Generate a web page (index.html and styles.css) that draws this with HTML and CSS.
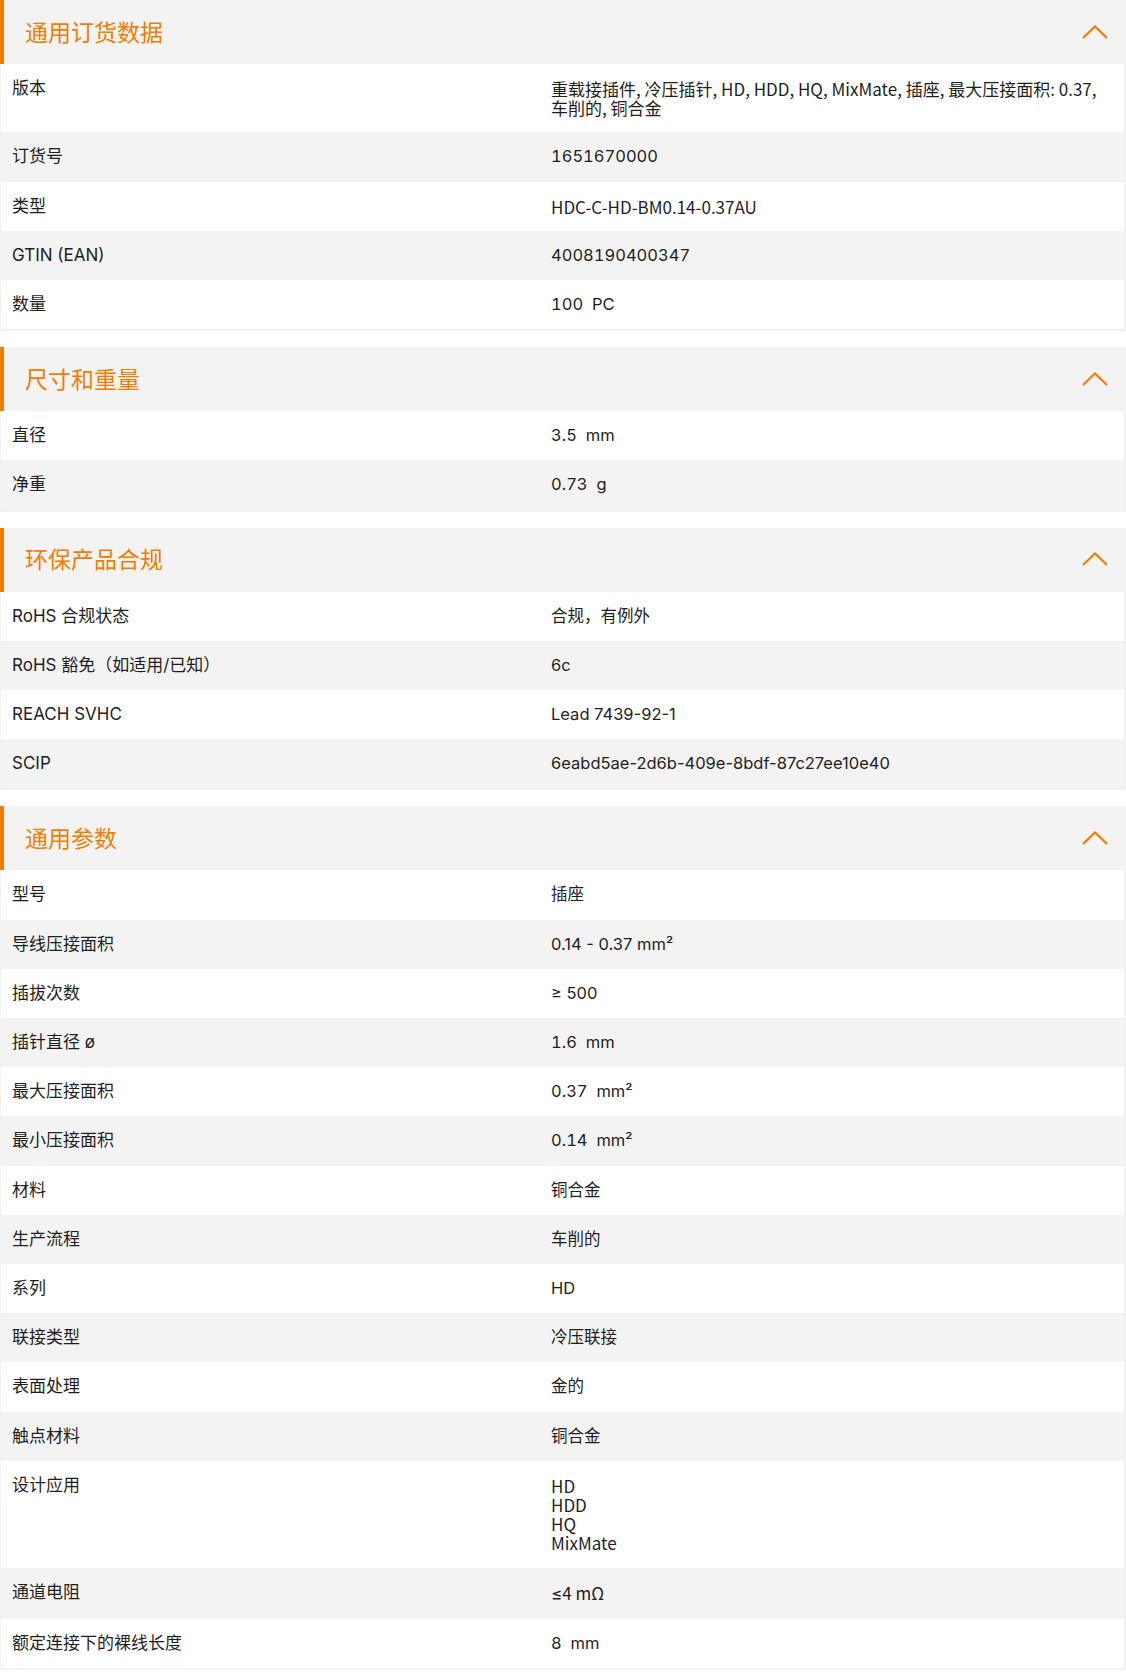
FILE: index.html
```html
<!DOCTYPE html>
<html lang="zh-CN">
<head>
<meta charset="utf-8">
<title>产品数据</title>
<link rel="stylesheet" href="styles.css">
</head>
<body>
<main class="page">

<section class="group">
  <div class="group-head">
    <h2 class="group-title">通用订货数据</h2>
    <svg class="chev" viewBox="0 0 26 14" width="26" height="14"><polyline points="1,13 13,1.5 25,13" fill="none" stroke="#f07d00" stroke-width="2.2"/></svg>
  </div>
  <div class="table">
    <div class="row"><div class="cell label">版本</div><div class="cell value cjk">重载接插件, 冷压插针, HD, HDD, HQ, MixMate, 插座, 最大压接面积: 0.37,<br>车削的, 铜合金</div></div>
    <div class="row"><div class="cell label">订货号</div><div class="cell value num">1651670000</div></div>
    <div class="row"><div class="cell label">类型</div><div class="cell value cjk">HDC-C-HD-BM0.14-0.37AU</div></div>
    <div class="row"><div class="cell label">GTIN (EAN)</div><div class="cell value num">4008190400347</div></div>
    <div class="row"><div class="cell label">数量</div><div class="cell value num">100&nbsp; PC</div></div>
  </div>
</section>

<section class="group">
  <div class="group-head">
    <h2 class="group-title">尺寸和重量</h2>
    <svg class="chev" viewBox="0 0 26 14" width="26" height="14"><polyline points="1,13 13,1.5 25,13" fill="none" stroke="#f07d00" stroke-width="2.2"/></svg>
  </div>
  <div class="table">
    <div class="row"><div class="cell label">直径</div><div class="cell value num">3.5&nbsp; mm</div></div>
    <div class="row"><div class="cell label">净重</div><div class="cell value num">0.73&nbsp; g</div></div>
  </div>
</section>

<section class="group">
  <div class="group-head">
    <h2 class="group-title">环保产品合规</h2>
    <svg class="chev" viewBox="0 0 26 14" width="26" height="14"><polyline points="1,13 13,1.5 25,13" fill="none" stroke="#f07d00" stroke-width="2.2"/></svg>
  </div>
  <div class="table">
    <div class="row"><div class="cell label">RoHS 合规状态</div><div class="cell value">合规，有例外</div></div>
    <div class="row"><div class="cell label">RoHS 豁免（如适用/已知）</div><div class="cell value">6c</div></div>
    <div class="row"><div class="cell label">REACH SVHC</div><div class="cell value">Lead 7439-92-1</div></div>
    <div class="row"><div class="cell label">SCIP</div><div class="cell value">6eabd5ae-2d6b-409e-8bdf-87c27ee10e40</div></div>
  </div>
</section>

<section class="group">
  <div class="group-head">
    <h2 class="group-title">通用参数</h2>
    <svg class="chev" viewBox="0 0 26 14" width="26" height="14"><polyline points="1,13 13,1.5 25,13" fill="none" stroke="#f07d00" stroke-width="2.2"/></svg>
  </div>
  <div class="table">
    <div class="row"><div class="cell label">型号</div><div class="cell value">插座</div></div>
    <div class="row"><div class="cell label">导线压接面积</div><div class="cell value">0.14 - 0.37 mm²</div></div>
    <div class="row"><div class="cell label">插拔次数</div><div class="cell value">≥ 500</div></div>
    <div class="row"><div class="cell label">插针直径 ø</div><div class="cell value num">1.6&nbsp; mm</div></div>
    <div class="row"><div class="cell label">最大压接面积</div><div class="cell value num">0.37&nbsp; mm²</div></div>
    <div class="row"><div class="cell label">最小压接面积</div><div class="cell value num">0.14&nbsp; mm²</div></div>
    <div class="row"><div class="cell label">材料</div><div class="cell value">铜合金</div></div>
    <div class="row"><div class="cell label">生产流程</div><div class="cell value">车削的</div></div>
    <div class="row"><div class="cell label">系列</div><div class="cell value">HD</div></div>
    <div class="row"><div class="cell label">联接类型</div><div class="cell value">冷压联接</div></div>
    <div class="row"><div class="cell label">表面处理</div><div class="cell value">金的</div></div>
    <div class="row"><div class="cell label">触点材料</div><div class="cell value">铜合金</div></div>
    <div class="row"><div class="cell label">设计应用</div><div class="cell value cjk multi">HD<br>HDD<br>HQ<br>MixMate</div></div>
    <div class="row"><div class="cell label">通道电阻</div><div class="cell value cjk"><span class="sym">≤</span>4 mΩ</div></div>
    <div class="row"><div class="cell label">额定连接下的裸线长度</div><div class="cell value num">8&nbsp; mm</div></div>
  </div>
</section>

</main>
</body>
</html>
```

FILE: styles.css
```css
html, body {
  margin: 0;
  padding: 0;
  background: #ffffff;
}

.page {
  width: 1126px;
  font-family: "Inter", "Noto Sans CJK SC", sans-serif;
  font-size: 16.5px;
  color: #1e1e1e;
}

.group {
  margin-bottom: 16px;
}

.group-head {
  height: 64px;
  background: #f3f3f3;
  border-left: 4px solid #f07d00;
  display: flex;
  align-items: center;
  justify-content: space-between;
  padding: 0 18px 3px 21px;
  box-sizing: border-box;
}

.group-title {
  margin: 0;
  font-family: "Noto Sans CJK SC", sans-serif;
  font-weight: 400;
  font-size: 23px;
  color: #f07d00;
  line-height: 30px;
}

.chev {
  display: block;
  margin-top: 2px;
}

.table {
  border-left: 1px solid #f1f1f1;
  border-right: 2px solid #f1f1f1;
  border-bottom: 2px solid #f1f1f1;
}

.row {
  display: grid;
  grid-template-columns: 538px 1fr;
  background: #ffffff;
}

.row:nth-child(even) {
  background: #f3f3f3;
}

.cell {
  padding: 15px 12px 15px 11px;
  line-height: 19.2px;
  font-weight: 400;
}

.label {
  font-size: 17px;
}

.value {
  padding-left: 12px;
}

.num {
  font-variant-numeric: tabular-nums;
}

.cjk {
  font-family: "Noto Sans CJK SC", sans-serif;
  font-size: 17px;
}

.sym {
  font-family: "Inter", sans-serif;
}
```
